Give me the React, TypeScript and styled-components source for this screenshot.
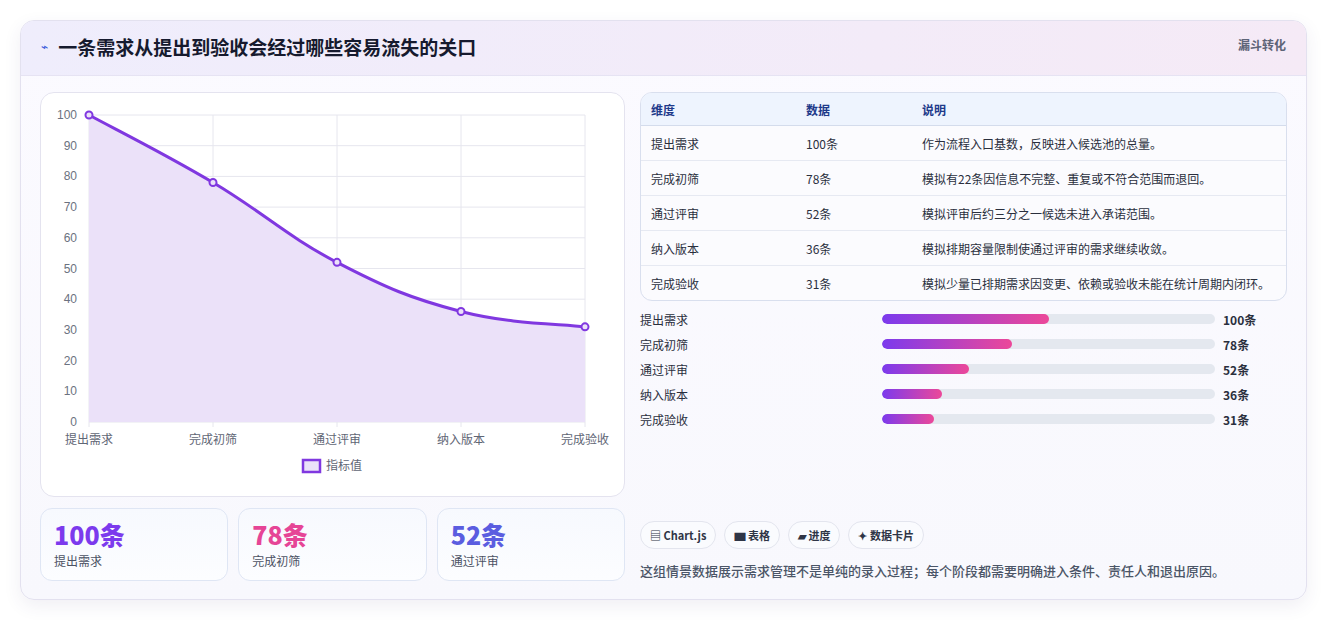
import React from 'react';
import styled, { createGlobalStyle } from 'styled-components';

const GlobalStyle = createGlobalStyle`
  body {
    margin: 0;
    background: #f3f3f5;
    font-family: "Noto Sans CJK SC", "Noto Sans", sans-serif;
  }
`;

const stages = [
  { name: '提出需求', value: 100, note: '作为流程入口基数，反映进入候选池的总量。' },
  { name: '完成初筛', value: 78, note: '模拟有22条因信息不完整、重复或不符合范围而退回。' },
  { name: '通过评审', value: 52, note: '模拟评审后约三分之一候选未进入承诺范围。' },
  { name: '纳入版本', value: 36, note: '模拟排期容量限制使通过评审的需求继续收敛。' },
  { name: '完成验收', value: 31, note: '模拟少量已排期需求因变更、依赖或验收未能在统计周期内闭环。' },
];

const Page = styled.div`
  background: #fff;
  padding: 20px 20px 22px;
`;

const Card = styled.div`
  border: 1px solid #e3e1ef;
  border-radius: 14px;
  background: linear-gradient(180deg, #fbfaff 0%, #f8f8fd 100%);
  box-shadow: 0 6px 18px rgba(60, 50, 110, 0.08);
  overflow: hidden;
`;

const Header = styled.div`
  height: 54px;
  display: flex;
  align-items: center;
  justify-content: space-between;
  padding: 0 20px;
  background: linear-gradient(90deg, #efedfc 0%, #f5eaf6 100%);
  border-bottom: 1px solid #e6e3f3;
`;

const Title = styled.h1`
  margin: 0 0 3px;
  font-size: 19px;
  font-weight: 700;
  color: #161a2e;
  display: flex;
  align-items: center;
  gap: 10px;
`;

const Bolt = styled.span`
  color: #3b5bdb;
  font-size: 12px;
  font-family: "DejaVu Sans", sans-serif;
`;

const Tag = styled.span`
  align-self: flex-start;
  margin-top: 15px;
  font-size: 12px;
  font-weight: 700;
  color: #5d6477;
`;

const Body = styled.div`
  display: grid;
  grid-template-columns: 585px 1fr;
  gap: 15px;
  padding: 16px 19px 18px;
`;

const LeftCol = styled.div`
  display: flex;
  flex-direction: column;
  gap: 11px;
`;

const ChartCard = styled.div`
  height: 403px;
  border: 1px solid #e4e3ef;
  border-radius: 14px;
  background: #fff;
`;

const Stats = styled.div`
  display: grid;
  grid-template-columns: repeat(3, 1fr);
  gap: 10px;
`;

const Stat = styled.div`
  height: 73px;
  box-sizing: border-box;
  border: 1px solid #dfe6f4;
  border-radius: 12px;
  background: linear-gradient(180deg, #f7f9fe, #fcfdff);
  padding: 9px 13px;
`;

const StatValue = styled.div<{ $color: string }>`
  font-size: 25px;
  font-weight: 800;
  line-height: 32px;
  color: ${(p) => p.$color};
`;

const StatLabel = styled.div`
  font-size: 12px;
  color: #4b5263;
  margin-top: 2px;
`;

const RightCol = styled.div`
  display: flex;
  flex-direction: column;
`;

const Table = styled.table`
  width: 100%;
  border-collapse: separate;
  border-spacing: 0;
  border: 1px solid #d9dfee;
  border-radius: 12px;
  overflow: hidden;
  font-size: 12px;
  background: #fbfbfe;
`;

const Th = styled.th`
  text-align: left;
  font-weight: 700;
  color: #1e3a8a;
  background: #eef4fe;
  height: 32px;
  padding: 0 10px;
  border-bottom: 1px solid #d4dcec;
`;

const Td = styled.td<{ $last?: boolean }>`
  height: 34px;
  padding: 0 10px;
  color: #2a2f3d;
  border-bottom: ${(p) => (p.$last ? 'none' : '1px solid #e6e9f2')};
`;

const Bars = styled.div`
  display: flex;
  flex-direction: column;
  gap: 7px;
  margin-top: 9px;
`;

const BarRow = styled.div`
  display: grid;
  grid-template-columns: 234px 333px auto;
  align-items: center;
  gap: 8px;
  font-size: 12px;
  height: 18px;
  color: #2a2f3d;
`;

const Track = styled.div`
  height: 10px;
  border-radius: 5px;
  background: #e4e8ef;
  overflow: hidden;
`;

const Fill = styled.div`
  height: 100%;
  border-radius: 5px;
  background: linear-gradient(90deg, #7c3aed, #ec4899);
`;

const BarValue = styled.span`
  font-weight: 700;
`;

const Chips = styled.div`
  margin-top: auto;
  display: flex;
  gap: 8px;
`;

const Chip = styled.span`
  height: 28px;
  box-sizing: border-box;
  border: 1px solid #e3e5ee;
  border-radius: 14px;
  background: #fafbfe;
  padding: 0 9px;
  display: flex;
  align-items: center;
  gap: 3px;
  font-size: 11px;
  font-weight: 600;
  color: #2f3546;
`;

const Foot = styled.p`
  margin: 12px 0 1px;
  font-size: 13px;
  font-weight: 500;
  color: #4b5567;
`;

const X0 = 48;
const XS = 124;
const Y0 = 329;
const YK = 3.07;

function pts() {
  return stages.map((s, i) => [X0 + i * XS, Y0 - s.value * YK]);
}

function curve(p: number[][]) {
  let d = `M${p[0][0]},${p[0][1]}`;
  for (let i = 0; i < p.length - 1; i++) {
    const a = p[i - 1] || p[i];
    const b = p[i];
    const c = p[i + 1];
    const e = p[i + 2] || c;
    const t = 0.2;
    d += ` C${b[0] + (c[0] - a[0]) * t},${b[1] + (c[1] - a[1]) * t} ${c[0] - (e[0] - b[0]) * t},${c[1] - (e[1] - b[1]) * t} ${c[0]},${c[1]}`;
  }
  return d;
}

const Chart = () => {
  const p = pts();
  const line = curve(p);
  const ticks = [0, 10, 20, 30, 40, 50, 60, 70, 80, 90, 100];
  return (
    <svg width="585" height="403" fontFamily="'Noto Sans CJK SC', sans-serif">
      {ticks.map((t) => (
        <g key={t}>
          <line x1={X0} x2={X0 + 4 * XS} y1={Y0 - t * YK} y2={Y0 - t * YK} stroke="#e6e6ee" />
          <text x={X0 - 12} y={Y0 - t * YK + 4} fontSize="12" fill="#6b7280" textAnchor="end" fontFamily="'Liberation Sans', sans-serif">{t}</text>
        </g>
      ))}
      {stages.map((s, i) => (
        <g key={s.name}>
          <line x1={X0 + i * XS} x2={X0 + i * XS} y1={Y0 - 100 * YK} y2={Y0 + 5} stroke="#e6e6ee" />
          <text x={X0 + i * XS} y={Y0 + 22} fontSize="12" fill="#5f6675" textAnchor="middle">{s.name}</text>
        </g>
      ))}
      <path d={`${line} L${X0 + 4 * XS},${Y0} L${X0},${Y0} Z`} fill="#ebe1f9" />
      <path d={line} fill="none" stroke="#8038e0" strokeWidth="3" />
      {p.map(([x, y], i) => (
        <circle key={i} cx={x} cy={y} r="3.5" fill="#ebe1f9" stroke="#8038e0" strokeWidth="2" />
      ))}
      <rect x="262" y="367" width="17" height="12" fill="#ebe1f9" stroke="#8038e0" strokeWidth="2.5" />
      <text x="285" y="377" fontSize="12" fill="#5f6675">指标值</text>
    </svg>
  );
};

export default function App() {
  return (
    <>
      <GlobalStyle />
      <Page>
        <Card>
          <Header>
            <Title><Bolt>⌁</Bolt>一条需求从提出到验收会经过哪些容易流失的关口</Title>
            <Tag>漏斗转化</Tag>
          </Header>
          <Body>
            <LeftCol>
              <ChartCard><Chart /></ChartCard>
              <Stats>
                {[['100条', '提出需求', '#7c3aed'], ['78条', '完成初筛', '#e64596'], ['52条', '通过评审', '#5b5de0']].map(([v, l, c]) => (
                  <Stat key={l}>
                    <StatValue $color={c}>{v}</StatValue>
                    <StatLabel>{l}</StatLabel>
                  </Stat>
                ))}
              </Stats>
            </LeftCol>
            <RightCol>
              <Table>
                <thead>
                  <tr><Th style={{ width: 135 }}>维度</Th><Th style={{ width: 96 }}>数据</Th><Th>说明</Th></tr>
                </thead>
                <tbody>
                  {stages.map((s, i) => (
                    <tr key={s.name}>
                      <Td $last={i === 4}>{s.name}</Td>
                      <Td $last={i === 4}>{s.value}条</Td>
                      <Td $last={i === 4}>{s.note}</Td>
                    </tr>
                  ))}
                </tbody>
              </Table>
              <Bars>
                {stages.map((s) => (
                  <BarRow key={s.name}>
                    <span>{s.name}</span>
                    <Track><Fill style={{ width: `${s.value / 2}%` }} /></Track>
                    <BarValue>{s.value}条</BarValue>
                  </BarRow>
                ))}
              </Bars>
              <Chips>
                <Chip>▤ Chart.js</Chip>
                <Chip>▆ 表格</Chip>
                <Chip>▰ 进度</Chip>
                <Chip>✦ 数据卡片</Chip>
              </Chips>
              <Foot>这组情景数据展示需求管理不是单纯的录入过程；每个阶段都需要明确进入条件、责任人和退出原因。</Foot>
            </RightCol>
          </Body>
        </Card>
      </Page>
    </>
  );
}
